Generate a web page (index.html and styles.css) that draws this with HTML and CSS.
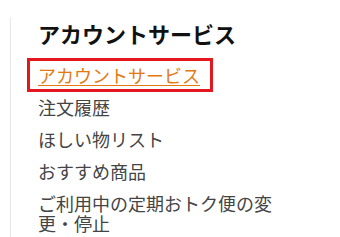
FILE: index.html
```html
<!DOCTYPE html>
<html lang="ja">
<head>
<meta charset="utf-8">
<link rel="stylesheet" href="styles.css">
</head>
<body>
<div class="sidebar">
  <h2 class="title">アカウントサービス</h2>
  <ul class="menu">
    <li class="item"><a class="link current" href="#">アカウントサービス</a></li>
    <li class="item">注文履歴</li>
    <li class="item">ほしい物リスト</li>
    <li class="item">おすすめ商品</li>
    <li class="item last">ご利用中の定期おトク便の変更・停止</li>
  </ul>
</div>
</body>
</html>
```
FILE: styles.css
```css
html, body {
  margin: 0;
  padding: 0;
  background: #fff;
}
body {
  font-family: "Noto Sans CJK JP", "Noto Sans", sans-serif;
  width: 340px;
  height: 237px;
  overflow: hidden;
}
.sidebar {
  box-sizing: border-box;
  margin: 17px 0 0 10px;
  border-left: 1px solid #e8e8e8;
  padding: 3px 0 0 27px;
  width: 268px;
  height: 220px;
}
.title {
  margin: 0 0 19px 0;
  font-size: 22px;
  line-height: 26px;
  font-weight: 700;
  color: #111;
}
.menu {
  list-style: none;
  margin: 0;
  padding: 0;
}
.item {
  font-size: 18px;
  line-height: 20px;
  color: #444;
  margin: 0 0 12px 0;
}
.last {
  margin-bottom: 0;
}
.link {
  color: #e47911;
  text-decoration: underline;
  text-underline-offset: 2px;
  text-decoration-thickness: 1px;
}
.current {
  display: inline-block;
  border: 3px solid #e4161e;
  padding: 4px 10px 4px 8px;
  margin: -7px 0 -7px -11px;
}
```
